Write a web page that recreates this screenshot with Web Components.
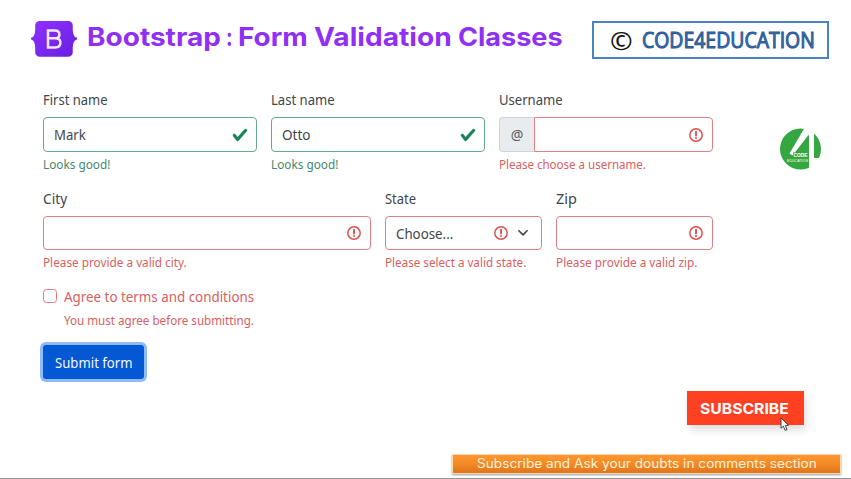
<!DOCTYPE html>
<html lang="en"><head><meta charset="utf-8"><title>Bootstrap : Form Validation Classes</title>
<style>html,body{margin:0;background:#fff;overflow:hidden}</style></head>
<body>
<lesson-slide></lesson-slide>
<script>
const shadow = (el, html) => { el.attachShadow({mode:'open'}).innerHTML = html; };

/* Status icons used inside the fields */
class StatusIcon extends HTMLElement {
  connectedCallback(){
    const shapes = {
      valid:'<svg width="16" height="16" viewBox="0 0 8 8"><path fill="#198057" stroke="#198057" stroke-width=".25" d="M2.3 6.73.6 4.53c-.4-1.04.46-1.4 1.1-.8l1.1 1.4 3.4-3.8c.6-.63 1.6-.27 1.2.7l-4 4.6c-.43.5-.8.4-1.1.1z"/></svg>',
      invalid:'<svg width="16" height="16" viewBox="0 0 16 16" fill="none" stroke="#d9534f"><circle cx="8" cy="8" r="6.2" stroke-width="1.5"/><path d="M8 4.6v4" stroke-width="1.9" stroke-linecap="round"/><circle cx="8" cy="11.1" r="1" fill="#d9534f" stroke="none"/></svg>',
      chevron:'<svg width="12" height="12" viewBox="0 0 16 16"><path fill="none" stroke="#40464c" stroke-width="2.2" stroke-linecap="round" stroke-linejoin="round" d="m2.500 5 5.500 5.500L13.500 5"/></svg>'
    };
    shadow(this, `<style>:host{display:block;flex:none}svg{display:block}</style>${shapes[this.getAttribute('kind')]}`);
  }
}

class FormField extends HTMLElement {
  connectedCallback(){
    const a = n => this.getAttribute(n) || '';
    const ok = this.hasAttribute('valid');
    shadow(this, `<style>
      :host{display:block;--line:${ok?'#65aa8c':'#e08084'};--ink:${ok?'#44896c':'#d8605e'}}
      .label{font-size:14px;line-height:20px;color:#41464b;margin-bottom:7px}
      .group{display:flex;height:${a('h')||35}px;box-sizing:border-box}
      .prefix{width:35px;box-sizing:border-box;border:1px solid #ced4da;border-right:0;border-radius:4px 0 0 4px;background:#e9ecef;display:flex;align-items:center;justify-content:center;padding-left:1px;font-size:14px;color:#555b61}
      .box{flex:1;box-sizing:border-box;border:1.3px solid var(--line);border-radius:${a('prefix')?'0 4px 4px 0':'4px'};display:flex;align-items:center;padding:0 ${a('chevron')?12:8}px 0 10.500px;font-size:14px;color:#41464b}
      .box status-icon{margin-left:auto}
      .box status-icon+status-icon{margin-left:8px}
      .note{font-size:12.4px;line-height:18px;margin-top:4px;color:var(--ink)}
    </style>
    <div class="label"><fit-text w="${a('lw')}">${a('label')}</fit-text></div>
    <div class="group">${a('prefix')?`<div class="prefix">${a('prefix')}</div>`:''}
      <div class="box">${a('value')?`<fit-text w="${a('vw')}">${a('value')}</fit-text>`:''}
      <status-icon kind="${ok?'valid':'invalid'}"></status-icon>${a('chevron')?'<status-icon kind="chevron"></status-icon>':''}</div></div>
    <div class="note"><fit-text w="${a('nw')}">${a('note')}</fit-text></div>`);
  }
}

class AgreeCheck extends HTMLElement {
  connectedCallback(){
    shadow(this, `<style>
      :host{display:grid;grid-template-columns:14px 1fr;column-gap:7px;align-content:start;color:#d8605e}
      i{width:14px;height:14px;box-sizing:border-box;border:1.2px solid #df7d82;border-radius:3.5px;margin-top:1px}
      .label{font-size:14px;line-height:20px;margin-top:-1px}
      .note{grid-column:2;font-size:12.4px;line-height:18px;margin-top:5px}
    </style><i></i><div class="label"><fit-text w="190">Agree to terms and conditions</fit-text></div>
    <div class="note"><fit-text w="189.5">You must agree before submitting.</fit-text></div>`);
  }
}

class SubmitButton extends HTMLElement {
  connectedCallback(){
    shadow(this, `<style>:host{display:flex;width:101px;height:34px;box-sizing:border-box;padding:1px 0 0 1px;align-items:center;justify-content:center;background:#0458d4;border-radius:3px;box-shadow:0 0 0 3px #8dbcf8;color:#f2f7ff;font-size:14px;line-height:20px}</style>
    <fit-text w="78"><slot></slot></fit-text>`);
  }
}

class BootstrapLogo extends HTMLElement {
  connectedCallback(){
    shadow(this, `<style>:host{display:block;flex:none}svg{display:block}</style>
    <svg width="46" height="37" viewBox="0 0 46 37"><defs><linearGradient id="g" x1="0" y1="0" x2="1" y2="1"><stop stop-color="#9130ff"/><stop offset="1" stop-color="#6620df"/></linearGradient></defs>
    <path fill="url(#g)" d="M9 0h28c3 0 5 2.200 4.800 5-.2 5 .1 11.200 4.200 11.800v1.800c-4.100.6-4.400 6.800-4.200 11.800.2 2.800-1.800 5.300-4.800 5.300H9c-3 0-5-2.500-4.800-5.300.2-5-.1-11.200-4.200-11.800v-1.800c4.100-.6 4.400-6.800 4.200-11.800C4 2.200 6 0 9 0z"/>
    <path fill="none" stroke="#f2e9ff" stroke-width="2.500" d="M17 9.500h6.800c2.900 0 4.600 1.500 4.600 3.900 0 2.300-1.700 3.900-4.400 3.900h-7 7.300c3.300 0 5.100 1.700 5.100 4.500s-2 4.700-5.300 4.700H17z"/></svg>`);
  }
}

class CopyrightBadge extends HTMLElement {
  connectedCallback(){
    shadow(this, `<style>
      :host{display:flex;align-items:center;box-sizing:border-box;width:237px;height:38px;border:2px solid #4b82c3;padding-left:16px;gap:9px}
      .c{font:26px/34px "Noto Sans",sans-serif;color:#111}
      .n{font:400 21px/30px "Open Sans",sans-serif;color:#3f78bd;-webkit-text-stroke:1px #285696}
    </style><fit-text class="c" w="23">©</fit-text><fit-text class="n" w="173">CODE4EDUCATION</fit-text>`);
  }
}

class ChannelMark extends HTMLElement {
  connectedCallback(){
    shadow(this, `<style>:host{display:block}svg{display:block}text{font-family:"Liberation Sans",sans-serif;fill:#fff}</style>
    <svg width="44" height="44" viewBox="0 0 44 44"><circle cx="21.500" cy="22" r="20.500" fill="#35a741"/>
    <path fill="#fff" d="M25.500 0H35v31h9v13H30V9z"/>
    <path fill="#35a741" d="M29.500 10v22H16.500z"/>
    <path fill="#fff" d="M25.500 1 10.500 26.500l3 2L29.500 8V1z"/>
    <path fill="#35a741" d="M14 25.500h15.500v11H8v-6h6z"/>
    <text x="14.500" y="29.500" font-size="5" font-weight="700" textLength="14" lengthAdjust="spacingAndGlyphs">CODE</text>
    <text x="8" y="35" font-size="3.800" textLength="21" lengthAdjust="spacingAndGlyphs">EDUCATION</text></svg>`);
  }
}

class SubscribeButton extends HTMLElement {
  connectedCallback(){
    shadow(this, `<style>
      :host{position:relative;display:flex;align-items:center;justify-content:center;box-sizing:border-box;padding:1px 2px 0 0;width:117px;height:34px;background:#ff4122;box-shadow:2px 5px 8px #0002;color:#fff;font:700 15px/20px Inter,sans-serif}
      svg{position:absolute;left:93px;top:26px}
    </style><fit-text w="89"><slot></slot></fit-text>
    <svg width="10" height="15" viewBox="0 0 10 15"><path d="M1 .8v10.400l2.400-2.100 1.700 4.300 2-.8-1.800-4.200h3.200z" fill="#fff" stroke="#333" stroke-width=".9"/></svg>`);
  }
}

class CommentBanner extends HTMLElement {
  connectedCallback(){
    shadow(this, `<style>:host{display:flex;align-items:center;justify-content:center;box-sizing:border-box;width:389px;height:20px;border:1px solid #f6d9b5;background:linear-gradient(#ff962e,#f58a26 50%,#de741c);box-shadow:0 1px 2px #0006;color:#fff3dc;font:12.500px/18px Inter,sans-serif}</style>
    <fit-text w="340"><slot></slot></fit-text>`);
  }
}

class LessonSlide extends HTMLElement {
  connectedCallback(){
    shadow(this, `<style>
      :host{display:flex;flex-direction:column;box-sizing:border-box;width:851px;height:479px;background:#fff;border-bottom:1px solid #929292;font-family:"Noto Sans",sans-serif}
      header{display:flex;align-items:flex-start;height:70px;padding:21px 22px 0 31px;box-sizing:border-box}
      h1{display:flex;gap:6px;margin:0 0 0 9.500px;font:700 25.500px/32px Inter,sans-serif;color:#9130f5}
      h1 fit-text:nth-child(2){margin:0 -1px 0 -1px}
      copyright-badge{margin-left:auto}
      main{display:flex;height:321px;padding:20px 0 0 42.500px;box-sizing:border-box}
      .form{width:670px}
      .row{display:grid;column-gap:14px;height:99px}
      .three{grid-template-columns:repeat(3,1fr)}
      .addr{grid-template-columns:328px 157px 1fr}
      agree-check{height:56px}
      channel-mark{margin:37px 0 0 66px}
      submit-button{margin-top:1px}
      footer{display:flex;flex-direction:column;align-items:flex-end;gap:29px}
      subscribe-button{margin-right:47px}
      comment-banner{margin-right:10px}
    </style>
    <header><bootstrap-logo></bootstrap-logo><h1><fit-text w="134">Bootstrap</fit-text><fit-text w="7">:</fit-text><fit-text w="70">Form</fit-text><fit-text w="138">Validation</fit-text><fit-text w="105">Classes</fit-text></h1><copyright-badge></copyright-badge></header>
    <main><div class="form">
      <div class="row three">
        <form-field valid label="First name" lw="65" value="Mark" vw="32" note="Looks good!" nw="67.500"></form-field>
        <form-field valid label="Last name" lw="63.500" value="Otto" vw="29" note="Looks good!" nw="67.500"></form-field>
        <form-field label="Username" lw="63.500" prefix="@" note="Please choose a username." nw="147"></form-field>
      </div>
      <div class="row addr">
        <form-field h="34" label="City" lw="24.500" note="Please provide a valid city." nw="143.500"></form-field>
        <form-field h="34" label="State" lw="31.500" value="Choose..." vw="57" chevron="1" note="Please select a valid state." nw="141"></form-field>
        <form-field h="34" label="Zip" lw="20.500" note="Please provide a valid zip." nw="141"></form-field>
      </div>
      <agree-check></agree-check>
      <submit-button>Submit form</submit-button>
    </div><channel-mark></channel-mark></main>
    <footer><subscribe-button>SUBSCRIBE</subscribe-button><comment-banner>Subscribe and Ask your doubts in comments section</comment-banner></footer>`);
  }
}

/* One line of text condensed or widened to the width given by its w attribute */
class FitText extends HTMLElement {
  connectedCallback(){
    const w = +this.getAttribute('w');
    shadow(this, `<style>:host{display:block;flex:none;width:${w}px;white-space:nowrap}span{display:inline-block;transform-origin:0 50%}</style><span><slot></slot></span>`);
    const s = this.shadowRoot.querySelector('span');
    s.style.transform = `scaleX(${w / s.offsetWidth})`;
  }
}

for (const [n, c] of Object.entries({'lesson-slide':LessonSlide,'bootstrap-logo':BootstrapLogo,'copyright-badge':CopyrightBadge,'form-field':FormField,'status-icon':StatusIcon,'agree-check':AgreeCheck,'submit-button':SubmitButton,'channel-mark':ChannelMark,'subscribe-button':SubscribeButton,'comment-banner':CommentBanner,'fit-text':FitText})) customElements.define(n, c);
</script>
</body></html>
